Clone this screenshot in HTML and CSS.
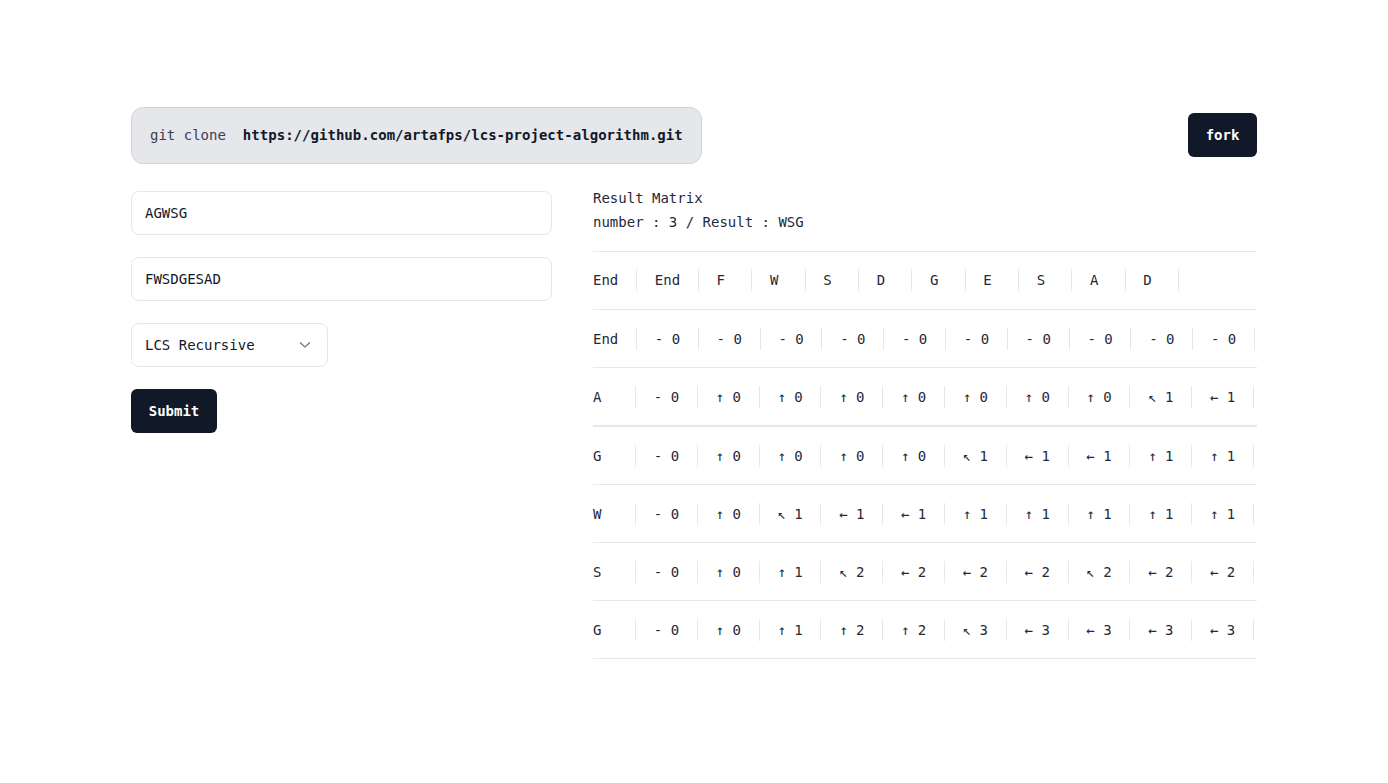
FILE: index.html
```html
<!DOCTYPE html>
<html lang="en">
<head>
<meta charset="utf-8">
<title>LCS Project Algorithm</title>
<link rel="stylesheet" href="styles.css">
</head>
<body>
<div class="page">
  <header class="topbar">
    <div class="clone-box">
      <span class="clone-cmd">git clone</span>
      <span class="clone-url">https://github.com/artafps/lcs-project-algorithm.git</span>
    </div>
    <button class="btn fork-btn">fork</button>
  </header>

  <main class="main">
    <form class="form">
      <input class="field" type="text" value="AGWSG">
      <input class="field" type="text" value="FWSDGESAD">
      <div class="select">
        <span>LCS Recursive</span>
        <svg class="chev" width="12" height="8" viewBox="0 0 12 8"><path d="M1 1.5 L6 6 L11 1.5" fill="none" stroke="#6b7280" stroke-width="1.2"/></svg>
      </div>
      <button class="btn submit-btn" type="button">Submit</button>
    </form>

    <section class="result">
      <div class="result-title">Result Matrix</div>
      <div class="result-line">number : 3 / Result : WSG</div>

      <div class="matrix">
        <div class="row head">
          <div class="cell first">End</div>
          <div class="cell">End</div>
          <div class="cell">F</div>
          <div class="cell">W</div>
          <div class="cell">S</div>
          <div class="cell">D</div>
          <div class="cell">G</div>
          <div class="cell">E</div>
          <div class="cell">S</div>
          <div class="cell">A</div>
          <div class="cell">D</div>
        </div>
        <div class="row">
          <div class="cell first">End</div>
          <div class="cell">- 0</div><div class="cell">- 0</div><div class="cell">- 0</div><div class="cell">- 0</div><div class="cell">- 0</div>
          <div class="cell">- 0</div><div class="cell">- 0</div><div class="cell">- 0</div><div class="cell">- 0</div><div class="cell">- 0</div>
        </div>
        <div class="row row-strong">
          <div class="cell first">A</div>
          <div class="cell">- 0</div><div class="cell">↑ 0</div><div class="cell">↑ 0</div><div class="cell">↑ 0</div><div class="cell">↑ 0</div>
          <div class="cell">↑ 0</div><div class="cell">↑ 0</div><div class="cell">↑ 0</div><div class="cell">↖ 1</div><div class="cell">← 1</div>
        </div>
        <div class="row">
          <div class="cell first">G</div>
          <div class="cell">- 0</div><div class="cell">↑ 0</div><div class="cell">↑ 0</div><div class="cell">↑ 0</div><div class="cell">↑ 0</div>
          <div class="cell">↖ 1</div><div class="cell">← 1</div><div class="cell">← 1</div><div class="cell">↑ 1</div><div class="cell">↑ 1</div>
        </div>
        <div class="row">
          <div class="cell first">W</div>
          <div class="cell">- 0</div><div class="cell">↑ 0</div><div class="cell">↖ 1</div><div class="cell">← 1</div><div class="cell">← 1</div>
          <div class="cell">↑ 1</div><div class="cell">↑ 1</div><div class="cell">↑ 1</div><div class="cell">↑ 1</div><div class="cell">↑ 1</div>
        </div>
        <div class="row">
          <div class="cell first">S</div>
          <div class="cell">- 0</div><div class="cell">↑ 0</div><div class="cell">↑ 1</div><div class="cell">↖ 2</div><div class="cell">← 2</div>
          <div class="cell">← 2</div><div class="cell">← 2</div><div class="cell">↖ 2</div><div class="cell">← 2</div><div class="cell">← 2</div>
        </div>
        <div class="row">
          <div class="cell first">G</div>
          <div class="cell">- 0</div><div class="cell">↑ 0</div><div class="cell">↑ 1</div><div class="cell">↑ 2</div><div class="cell">↑ 2</div>
          <div class="cell">↖ 3</div><div class="cell">← 3</div><div class="cell">← 3</div><div class="cell">← 3</div><div class="cell">← 3</div>
        </div>
      </div>
    </section>
  </main>
</div>
</body>
</html>
```

FILE: styles.css
```css
* { box-sizing: border-box; }

body {
  margin: 0;
  background: #ffffff;
  color: #1f2937;
  font-family: "DejaVu Sans Mono", "Liberation Mono", monospace;
  font-size: 14px;
}

.page {
  width: 1126px;
  margin: 0 auto;
  padding-top: 107px;
}

.topbar {
  display: flex;
  align-items: center;
  justify-content: space-between;
}

.clone-box {
  display: flex;
  align-items: center;
  gap: 17px;
  height: 57px;
  padding: 0 18px 0 18px;
  background: #e5e7eb;
  border: 1px solid #d1d5db;
  border-radius: 12px;
  line-height: 17px;
}

.clone-cmd { color: #374151; }
.clone-url { color: #111827; font-weight: bold; letter-spacing: 0.03px; }

.btn {
  height: 44px;
  border: none;
  border-radius: 6px;
  background: #111827;
  color: #ffffff;
  font-family: inherit;
  font-size: 14px;
  font-weight: bold;
  padding: 0 17px;
  cursor: pointer;
}

.fork-btn { width: 69px; padding: 0; margin-top: -1px; }
.submit-btn { width: 86px; padding: 0; }

.main {
  display: flex;
  gap: 41px;
  margin-top: 22px;
}

.form {
  width: 421px;
  padding-top: 5px;
  display: flex;
  flex-direction: column;
  align-items: flex-start;
  gap: 22px;
}

.field {
  width: 421px;
  height: 44px;
  border: 1px solid #e5e7eb;
  border-radius: 8px;
  padding: 0 13px;
  font-family: inherit;
  font-size: 14px;
  color: #111827;
  outline: none;
}

.select {
  width: 197px;
  height: 44px;
  border: 1px solid #e5e7eb;
  border-radius: 8px;
  padding: 0 16px 0 13px;
  display: flex;
  align-items: center;
  justify-content: space-between;
  color: #111827;
}

.chev { display: block; }

.result {
  width: 664px;
}

.result-title,
.result-line {
  line-height: 24px;
  color: #1f2937;
}

.matrix {
  margin-top: 17px;
  border-top: 1px solid #e5e7eb;
}

.row {
  display: flex;
  padding: 18px 0 17px;
  border-bottom: 1px solid #e5e7eb;
}

.row.head { padding-top: 17px; padding-bottom: 18px; }

.row-strong { border-bottom-width: 2px; }

.cell {
  min-width: calc(2ch + 36.5px);
  height: 22px;
  line-height: 22px;
  padding: 0 17.75px;
  border-right: 1px solid #e5e7eb;
  white-space: pre;
  color: #1f2937;
}

.cell.first {
  min-width: calc(3ch + 17.75px);
  padding-left: 0;
}
```
